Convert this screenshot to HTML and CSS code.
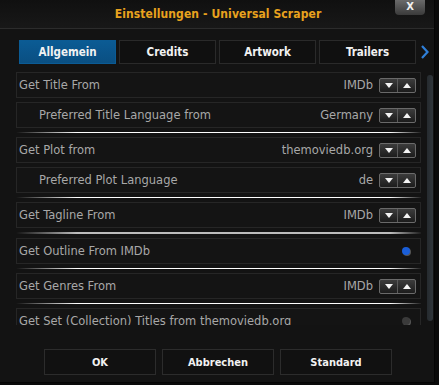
FILE: index.html
```html
<!DOCTYPE html>
<html lang="de">
<head>
<meta charset="UTF-8" />
<title>Einstellungen - Universal Scraper</title>
<link rel="stylesheet" href="styles.css">
</head>
<body>
  <div class="dialog">
    <div class="titlebar">
      <div class="title">Einstellungen - Universal Scraper</div>
      <div class="close">X</div>
    </div>

    <div class="tabs">
      <div class="tab active">Allgemein</div>
      <div class="tab">Credits</div>
      <div class="tab">Artwork</div>
      <div class="tab">Trailers</div>
      <div class="tab-next">
        <svg width="8" height="14" viewBox="0 0 8 14"><path d="M1 1 L6.5 7 L1 13" fill="none" stroke="#2f7fd8" stroke-width="2.2"/></svg>
      </div>
    </div>

    <div class="content">
      <div class="list">
        <div class="row">
          <span class="label">Get Title From</span>
          <span class="value">IMDb</span>
          <span class="spin"><span class="down"></span><span class="up"></span></span>
        </div>
        <div class="row sub">
          <span class="label">Preferred Title Language from</span>
          <span class="value">Germany</span>
          <span class="spin"><span class="down"></span><span class="up"></span></span>
        </div>
        <div class="sep"></div>
        <div class="row">
          <span class="label">Get Plot from</span>
          <span class="value">themoviedb.org</span>
          <span class="spin"><span class="down"></span><span class="up"></span></span>
        </div>
        <div class="row sub">
          <span class="label">Preferred Plot Language</span>
          <span class="value">de</span>
          <span class="spin"><span class="down"></span><span class="up"></span></span>
        </div>
        <div class="sep"></div>
        <div class="row">
          <span class="label">Get Tagline From</span>
          <span class="value">IMDb</span>
          <span class="spin"><span class="down"></span><span class="up"></span></span>
        </div>
        <div class="sep gray"></div>
        <div class="row">
          <span class="label">Get Outline From IMDb</span>
          <span class="radio on"></span>
        </div>
        <div class="sep"></div>
        <div class="row">
          <span class="label">Get Genres From</span>
          <span class="value">IMDb</span>
          <span class="spin"><span class="down"></span><span class="up"></span></span>
        </div>
        <div class="sep"></div>
        <div class="row">
          <span class="label">Get Set (Collection) Titles from themoviedb.org</span>
          <span class="radio"></span>
        </div>
      </div>
      <div class="scrollbar"><div class="thumb"></div></div>
    </div>

    <div class="buttons">
      <div class="button">OK</div>
      <div class="button">Abbrechen</div>
      <div class="button">Standard</div>
    </div>
  </div>
</body>
</html>
```

FILE: styles.css
```css
body {
  margin: 0;
  background-color: #0a0a0a;
  font-family: 'DejaVu Sans', sans-serif;
}
.dialog {
  width: 434px;
  height: 382px;
  background-color: #131313;
  border-right: 1px solid #050505;
  border-bottom: 1px solid #050505;
  position: relative;
  overflow: hidden;
}
.titlebar {
  height: 28px;
  display: flex;
  align-items: center;
  justify-content: center;
  background: linear-gradient(#101010, #181818);
  border-bottom: 1px solid #2c2c2c;
}
.title {
  color: #e8a21e;
  font-family: 'DejaVu Sans Condensed', 'DejaVu Sans', sans-serif;
  font-weight: bold;
  font-size: 12px;
  letter-spacing: 0.1px;
  margin-left: 2px;
}
.close {
  position: absolute;
  top: 0;
  left: 395px;
  width: 30px;
  height: 15px;
  border-radius: 0 0 4px 4px;
  background: linear-gradient(#6a6a6a, #3a3a3a);
  color: #f0f0f0;
  font-weight: bold;
  font-size: 10px;
  line-height: 14px;
  text-align: center;
}
.tabs {
  display: flex;
  gap: 3px;
  margin: 11px 0 0 19px;
  height: 24px;
}
.tab {
  width: 95px;
  border: 1px solid #2a2a2a;
  background-color: #101010;
  color: #f2f2f2;
  font-family: 'DejaVu Sans Condensed', 'DejaVu Sans', sans-serif;
  font-weight: bold;
  font-size: 11.5px;
  display: flex;
  align-items: center;
  justify-content: center;
}
.tab.active {
  background: linear-gradient(#0b5b94, #0a4f82);
  border-color: #0b5b94;
}
.tab-next {
  display: flex;
  align-items: center;
  margin-left: 2px;
}
.content {
  display: flex;
  margin-top: 8px;
  height: 253px;
}
.list {
  width: 405px;
  margin-left: 16px;
  overflow: hidden;
  display: flex;
  flex-direction: column;
  gap: 4px;
}
.row {
  flex: none;
  height: 24px;
  border: 1px solid #262626;
  background-color: #141414;
  display: flex;
  align-items: center;
  padding: 0 4px 0 2px;
  color: #a8a8a8;
  font-size: 11.5px;
}
.row.sub .label {
  padding-left: 20px;
}
.label {
  flex: 1;
  white-space: nowrap;
}
.value {
  margin-right: 6px;
}
.spin {
  display: flex;
  width: 37px;
  height: 15px;
  border: 1px solid #6a6a6a;
  border-radius: 2px;
  box-sizing: border-box;
  background: linear-gradient(#3c3c3c, #1c1c1c);
}
.spin span {
  flex: 1;
  display: flex;
  align-items: center;
  justify-content: center;
}
.spin .down {
  border-right: 1px solid #5a5a5a;
}
.spin .down::after {
  content: '';
  border-left: 4px solid transparent;
  border-right: 4px solid transparent;
  border-top: 5px solid #f4f4f4;
}
.spin .up::after {
  content: '';
  border-left: 4px solid transparent;
  border-right: 4px solid transparent;
  border-bottom: 5px solid #f4f4f4;
}
.radio {
  width: 8px;
  height: 8px;
  border-radius: 50%;
  background-color: #3a3a3a;
  box-shadow: 1px 1px 0 #555;
  margin-right: 6px;
}
.radio.on {
  background-color: #1a5ed8;
}
.sep {
  flex: none;
  height: 1px;
  margin: 0 -2px 0 0;
  background: linear-gradient(to right, transparent 0, #ffffff 15%, #ffffff 92%, transparent 100%);
}
.sep.gray {
  height: 2px;
  background: linear-gradient(to right, transparent 0, #bdbdbd 15%, #bdbdbd 92%, transparent 100%);
}
.scrollbar {
  width: 6px;
  margin-left: 6px;
  margin-top: 3px;
  height: 246px;
}
.thumb {
  height: 100%;
  border-radius: 3px;
  background: linear-gradient(to right, #252a2e, #30363b);
}
.buttons {
  display: flex;
  gap: 6px;
  margin: 24px 0 0 44px;
}
.button {
  width: 110px;
  height: 24px;
  border: 1px solid #2c2c2c;
  background-color: #111111;
  color: #f2f2f2;
  font-family: 'DejaVu Sans Condensed', 'DejaVu Sans', sans-serif;
  font-weight: bold;
  font-size: 11px;
  display: flex;
  align-items: center;
  justify-content: center;
}
```
